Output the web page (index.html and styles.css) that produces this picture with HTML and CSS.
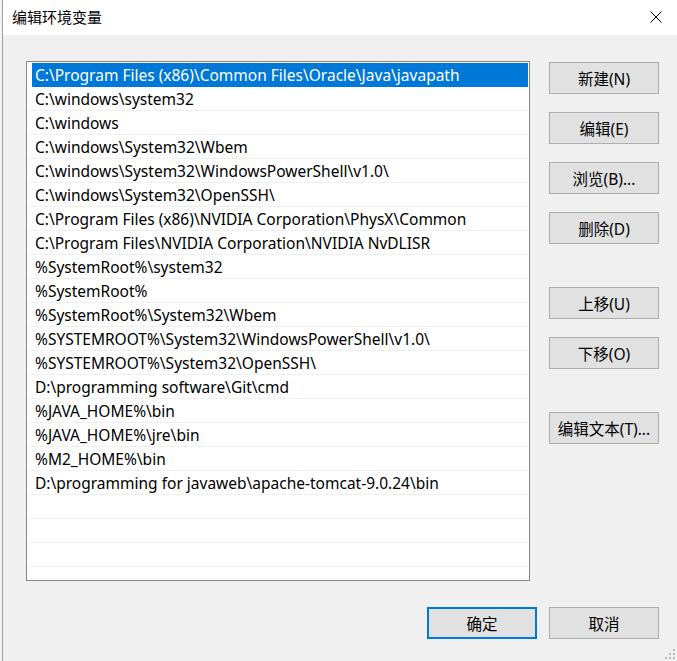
FILE: index.html
```html
<!DOCTYPE html>
<html lang="zh-CN">
<head>
    <meta charset="UTF-8">
    <title>编辑环境变量</title>
    <link rel="stylesheet" href="styles.css">
</head>
<body>
    <div class="behind"></div>
    <div class="dialog">
        <div class="titlebar">
            <span class="title">编辑环境变量</span>
            <svg class="close" width="12" height="12" viewBox="0 0 12 12">
                <path d="M0.5 0.5 L11.5 11.5 M11.5 0.5 L0.5 11.5" stroke="#000" stroke-width="1" fill="none"/>
            </svg>
        </div>

        <div class="content">
            <div class="list">
                <div class="row selected">C:\Program Files (x86)\Common Files\Oracle\Java\javapath</div>
                <div class="row">C:\windows\system32</div>
                <div class="row">C:\windows</div>
                <div class="row">C:\windows\System32\Wbem</div>
                <div class="row">C:\windows\System32\WindowsPowerShell\v1.0\</div>
                <div class="row">C:\windows\System32\OpenSSH\</div>
                <div class="row">C:\Program Files (x86)\NVIDIA Corporation\PhysX\Common</div>
                <div class="row">C:\Program Files\NVIDIA Corporation\NVIDIA NvDLISR</div>
                <div class="row">%SystemRoot%\system32</div>
                <div class="row">%SystemRoot%</div>
                <div class="row">%SystemRoot%\System32\Wbem</div>
                <div class="row">%SYSTEMROOT%\System32\WindowsPowerShell\v1.0\</div>
                <div class="row">%SYSTEMROOT%\System32\OpenSSH\</div>
                <div class="row">D:\programming software\Git\cmd</div>
                <div class="row">%JAVA_HOME%\bin</div>
                <div class="row">%JAVA_HOME%\jre\bin</div>
                <div class="row">%M2_HOME%\bin</div>
                <div class="row">D:\programming for javaweb\apache-tomcat-9.0.24\bin</div>
                <div class="row"></div>
                <div class="row"></div>
                <div class="row"></div>
                <div class="row"></div>
            </div>

            <div class="side">
                <div class="btn-group">
                    <button class="btn">新建(N)</button>
                    <button class="btn">编辑(E)</button>
                    <button class="btn">浏览(B)...</button>
                    <button class="btn">删除(D)</button>
                </div>
                <div class="btn-group">
                    <button class="btn">上移(U)</button>
                    <button class="btn">下移(O)</button>
                </div>
                <div class="btn-group">
                    <button class="btn">编辑文本(T)...</button>
                </div>
            </div>
        </div>

        <div class="footer">
            <button class="btn default">确定</button>
            <button class="btn">取消</button>
        </div>

        <svg class="grip" width="12" height="12" viewBox="0 0 12 12">
            <rect x="9" y="1" width="2" height="2" fill="#bcbcbc"/>
            <rect x="5" y="5" width="2" height="2" fill="#bcbcbc"/>
            <rect x="9" y="5" width="2" height="2" fill="#bcbcbc"/>
            <rect x="1" y="9" width="2" height="2" fill="#bcbcbc"/>
            <rect x="5" y="9" width="2" height="2" fill="#bcbcbc"/>
            <rect x="9" y="9" width="2" height="2" fill="#bcbcbc"/>
        </svg>
    </div>
</body>
</html>
```

FILE: styles.css
```css
html, body {
    margin: 0;
    padding: 0;
    height: 100%;
}
body {
    display: flex;
    font-family: "Noto Sans", "Noto Sans CJK SC", sans-serif;
    font-size: 15.5px;
    color: #000;
    background-color: #f0f0f0;
    overflow: hidden;
}
.behind {
    width: 2px;
    background-color: #f4f4f4;
}
.dialog {
    position: relative;
    flex: 1;
    display: flex;
    flex-direction: column;
    background-color: #f0f0f0;
    border-left: 1px solid #a0a0a0;
}
.titlebar {
    height: 35px;
    background-color: #fff;
    display: flex;
    align-items: center;
    justify-content: space-between;
    padding: 0 15px 0 9px;
}
.title {
    font-size: 15px;
    margin-top: -2px;
}
.close {
    margin-top: -2px;
}
.content {
    display: flex;
    padding: 26px 18px 0 23px;
    gap: 19px;
}
.list {
    width: 502px;
    height: 517px;
    border: 1px solid #828790;
    background-color: #fff;
    padding-top: 1px;
    overflow: hidden;
    box-sizing: content-box;
}
.row {
    height: 22px;
    line-height: 22px;
    padding-top: 1px;
    margin-left: 1px;
    margin-right: 1px;
    padding-left: 7px;
    border-bottom: 1px solid #f0f0f0;
    white-space: nowrap;
}
.row.selected {
    margin-left: 5px;
    padding-left: 3px;
    background-color: #0078d7;
    color: #fff;
    border-bottom-color: #0078d7;
}
.side {
    width: 110px;
    display: flex;
    flex-direction: column;
    gap: 43px;
    padding-top: 1px;
}
.btn-group {
    display: flex;
    flex-direction: column;
    gap: 18px;
}
.btn {
    width: 110px;
    height: 32px;
    background-color: #e1e1e1;
    border: 1px solid #adadad;
    font-family: "Noto Sans", "Noto Sans CJK SC", sans-serif;
    font-size: 15.5px;
    color: #000;
    padding: 0;
}
.btn.default {
    border: 2px solid #0078d7;
}
.footer {
    display: flex;
    justify-content: flex-end;
    gap: 12px;
    padding: 26px 18px 0 0;
}
.grip {
    position: absolute;
    right: 1px;
    bottom: 1px;
}
```
